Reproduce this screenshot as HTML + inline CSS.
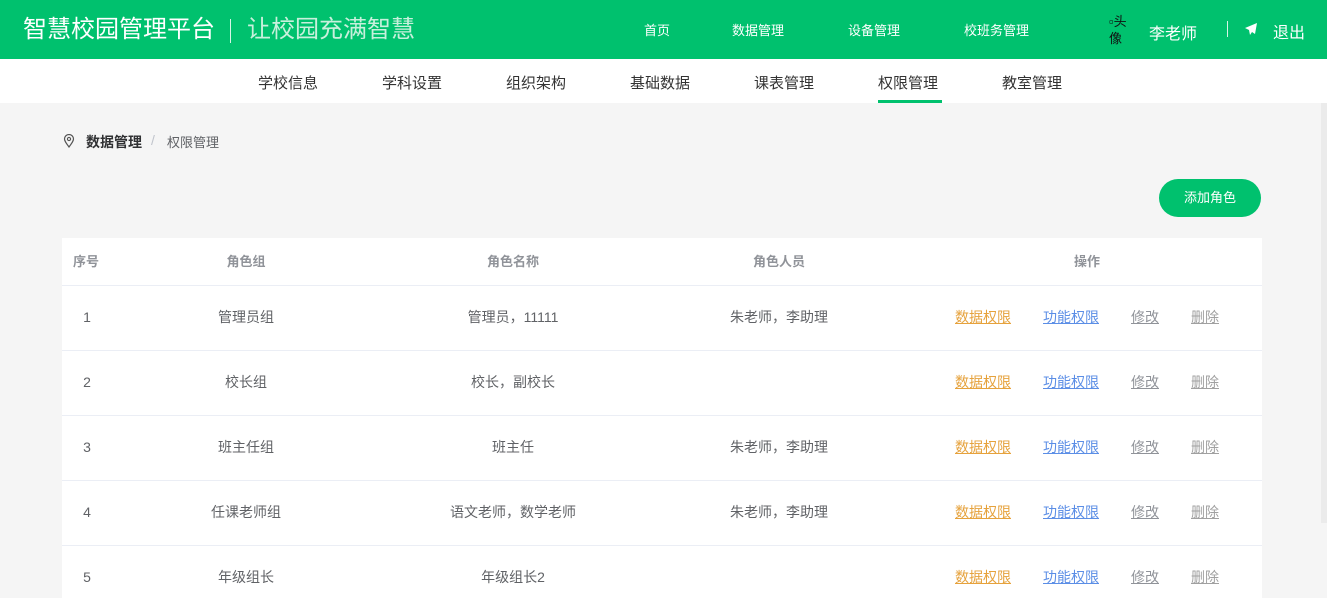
<!DOCTYPE html>
<html><head><meta charset="utf-8"><style>
*{margin:0;padding:0;box-sizing:border-box}
body{width:1327px;height:592px;overflow:hidden;background:#f5f5f5;font-family:"Liberation Sans","Noto Sans CJK SC",sans-serif;position:relative}
.a{position:absolute;white-space:nowrap}
.hd{position:absolute;left:0;top:0;width:1327px;height:59px;background:#00c16e;color:#fff}
.sub{position:absolute;left:0;top:59px;width:1327px;height:44px;background:#fff}
.tb{position:absolute;left:62px;top:238px;width:1200px;height:360px;background:#fff}
.line{position:absolute;left:0;width:1200px;height:1px;background:#ebeef5}
.c{position:absolute;transform:translateX(-50%);white-space:nowrap;font-size:14px;line-height:20px;color:#606266}
.th{font-weight:bold;color:#909399;font-size:13px;line-height:20px}
.u{text-decoration:underline;font-size:14px;line-height:20px}
</style></head><body>
<div class="hd">
<div class="a" style="left:23px;top:14px;font-size:24px;line-height:32px">智慧校园管理平台</div>
<div class="a" style="left:230px;top:19px;width:1px;height:24px;background:#d6f5e6"></div>
<div class="a" style="left:247px;top:14px;font-size:24px;line-height:32px;color:#c8f0dc">让校园充满智慧</div>
<div class="a" style="left:644px;top:20px;font-size:13px">首页</div>
<div class="a" style="left:732px;top:20px;font-size:13px">数据管理</div>
<div class="a" style="left:848px;top:20px;font-size:13px">设备管理</div>
<div class="a" style="left:964px;top:20px;font-size:13px">校班务管理</div>
<div class="a" style="left:1109px;top:13px;font-size:13px;line-height:17px;width:30px;white-space:normal;color:#111">▫头<br>像</div>
<div class="a" style="left:1149px;top:20px;font-size:16px">李老师</div>
<div class="a" style="left:1227px;top:21px;width:1px;height:16px;background:#d6f5e6"></div>
<svg class="a" style="left:1244px;top:22px" width="14" height="14" viewBox="0 0 14 14"><path d="M13 1L1 6l4 2 1 5 2-3 3 2z" fill="#fff"/></svg>
<div class="a" style="left:1273px;top:19px;font-size:16px">退出</div>
</div>
<div class="sub">
<div class="a" style="left:258px;top:13px;font-size:15px;color:#333">学校信息</div>
<div class="a" style="left:382px;top:13px;font-size:15px;color:#333">学科设置</div>
<div class="a" style="left:506px;top:13px;font-size:15px;color:#333">组织架构</div>
<div class="a" style="left:630px;top:13px;font-size:15px;color:#333">基础数据</div>
<div class="a" style="left:754px;top:13px;font-size:15px;color:#333">课表管理</div>
<div class="a" style="left:878px;top:13px;font-size:15px;color:#333">权限管理</div>
<div class="a" style="left:878px;top:41px;width:64px;height:3px;background:#00c16e"></div>
<div class="a" style="left:1002px;top:13px;font-size:15px;color:#333">教室管理</div>
</div>
<svg class="a" style="left:63px;top:134px" width="12" height="14" viewBox="0 0 12 14"><path d="M6 13C3 9 1.5 7 1.5 5a4.5 4.5 0 019 0c0 2-1.5 4-4.5 8z" fill="none" stroke="#555" stroke-width="1.2"/><circle cx="6" cy="5" r="1.6" fill="none" stroke="#555" stroke-width="1.1"/></svg>
<div class="a" style="left:86px;top:132px;font-size:14px;font-weight:bold;color:#303133">数据管理</div>
<div class="a" style="left:151px;top:132px;font-size:14px;color:#c0c4cc">/</div>
<div class="a" style="left:167px;top:132px;font-size:13px;color:#606266">权限管理</div>
<div class="a" style="left:1159px;top:179px;width:102px;height:38px;border-radius:19px;background:#00c16e;color:#fff;font-size:13px;text-align:center;line-height:38px">添加角色</div>
<div class="tb">
<div class="a th" style="left:11px;top:14px">序号</div>
<div class="c th" style="left:184px;top:14px">角色组</div>
<div class="c th" style="left:451px;top:14px">角色名称</div>
<div class="c th" style="left:717px;top:14px">角色人员</div>
<div class="c th" style="left:1025px;top:14px">操作</div>
<div class="line" style="top:47px"></div>
<div class="line" style="top:112px"></div>
<div class="line" style="top:177px"></div>
<div class="line" style="top:242px"></div>
<div class="line" style="top:307px"></div>
</div>
<div id="rows"></div>
<script>
var d=[["1","管理员组","管理员，11111","朱老师，李助理"],["2","校长组","校长，副校长",""],["3","班主任组","班主任","朱老师，李助理"],["4","任课老师组","语文老师，数学老师","朱老师，李助理"],["5","年级组长","年级组长2",""]];
var h="";d.forEach(function(r,i){var y=307+i*65;
h+='<div class="c" style="left:87px;top:'+y+'px">'+r[0]+'</div><div class="c" style="left:246px;top:'+y+'px">'+r[1]+'</div><div class="c" style="left:513px;top:'+y+'px">'+r[2]+'</div><div class="c" style="left:779px;top:'+y+'px">'+r[3]+'</div>'+
'<div class="a u" style="left:955px;top:'+y+'px;color:#e6a23c">数据权限</div><div class="a u" style="left:1043px;top:'+y+'px;color:#5b8ee6">功能权限</div><div class="a u" style="left:1131px;top:'+y+'px;color:#909399">修改</div><div class="a u" style="left:1191px;top:'+y+'px;color:#a0a0a0">删除</div>';});
document.getElementById("rows").innerHTML=h;
</script>
<div class="a" style="left:1321px;top:103px;width:6px;height:420px;background:#ebebeb"></div>
</body></html>
